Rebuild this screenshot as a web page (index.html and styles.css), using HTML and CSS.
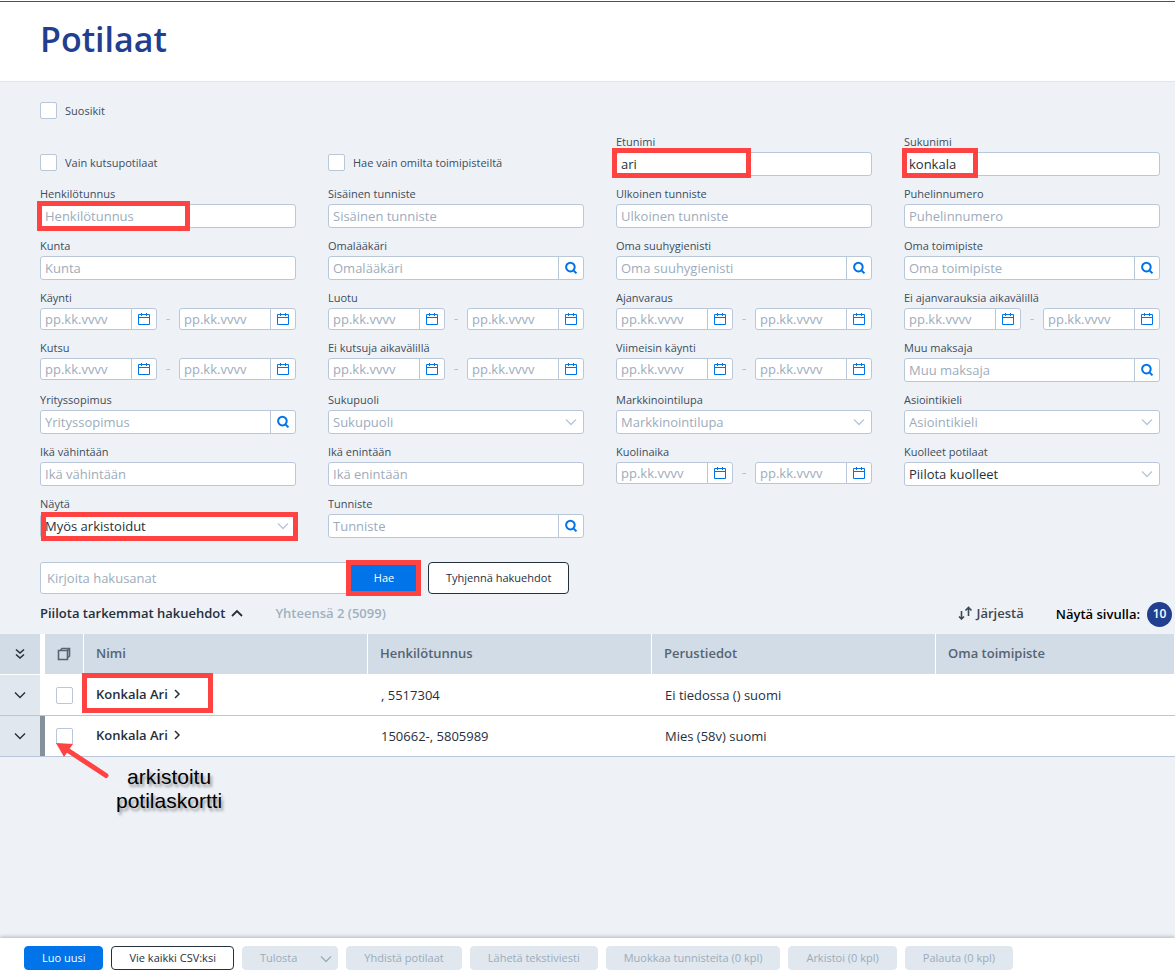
FILE: index.html
```html
<!DOCTYPE html>
<html lang="fi">
<head>
    <meta charset="UTF-8">
    <meta name="viewport" content="width=device-width, initial-scale=1">
    <title>Potilaat</title>
    <link rel="stylesheet" href="styles.css">
</head>
<body>

<!-- icons -->
<svg class="sprite" aria-hidden="true">
    <symbol id="i-cal" viewBox="0 0 14 14"><path d="M1.5 2.5h11v10h-11zM1 5.5h12M4.5 1v3M9.5 1v3" fill="none" stroke="currentColor"/></symbol>
    <symbol id="i-search" viewBox="0 0 14 14"><path d="M10.7 6.1a4.3 4.3 0 1 1-8.6 0a4.3 4.3 0 1 1 8.6 0zM9.3 9.2l3.2 3.2" fill="none" stroke="currentColor" stroke-width="2"/></symbol>
    <symbol id="i-down" viewBox="0 0 12 12"><path d="M1 3.5l5 5l5-5" fill="none" stroke="currentColor" stroke-width="1.4"/></symbol>
    <symbol id="i-up" viewBox="0 0 12 12"><path d="M1 9l5-5l5 5" fill="none" stroke="currentColor" stroke-width="1.8"/></symbol>
    <symbol id="i-right" viewBox="0 0 8 10"><path d="M2 1l4 4l-4 4" fill="none" stroke="currentColor" stroke-width="1.5"/></symbol>
    <symbol id="i-double" viewBox="0 0 12 12"><path d="M2 1.500l4 3.500l4-3.500M2 6.500l4 3.500l4-3.500" fill="none" stroke="currentColor" stroke-width="1.6"/></symbol>
</svg>

<header class="header">
    <h1>Potilaat</h1>
</header>

<main class="content">
    <form class="search">
        <label class="check"><input type="checkbox"> Suosikit</label>

        <div class="fields">
            <label class="check in-grid"><input type="checkbox"> Vain kutsupotilaat</label>
            <label class="check in-grid"><input type="checkbox"> Hae vain omilta toimipisteiltä</label>
            <div class="field">
                <label for="etunimi">Etunimi</label>
                <div class="box"><input type="text" id="etunimi" value="ari"><span class="mark mark-first"></span></div>
            </div>
            <div class="field">
                <label for="sukunimi">Sukunimi</label>
                <div class="box"><input type="text" id="sukunimi" value="konkala"><span class="mark mark-last"></span></div>
            </div>

            <div class="field">
                <label for="hetu">Henkilötunnus</label>
                <div class="box"><input type="text" id="hetu" placeholder="Henkilötunnus"><span class="mark mark-hetu"></span></div>
            </div>
            <div class="field">
                <label for="sis">Sisäinen tunniste</label>
                <div class="box"><input type="text" id="sis" placeholder="Sisäinen tunniste"></div>
            </div>
            <div class="field">
                <label for="ulk">Ulkoinen tunniste</label>
                <div class="box"><input type="text" id="ulk" placeholder="Ulkoinen tunniste"></div>
            </div>
            <div class="field">
                <label for="puh">Puhelinnumero</label>
                <div class="box"><input type="text" id="puh" placeholder="Puhelinnumero"></div>
            </div>

            <div class="field">
                <label for="kunta">Kunta</label>
                <div class="box"><input type="text" id="kunta" placeholder="Kunta"></div>
            </div>
            <div class="field">
                <label for="laakari">Omalääkäri</label>
                <div class="box"><input type="text" id="laakari" placeholder="Omalääkäri"><button type="button" class="pick" aria-label="Hae"><svg><use href="#i-search"/></svg></button></div>
            </div>
            <div class="field">
                <label for="suuhyg">Oma suuhygienisti</label>
                <div class="box"><input type="text" id="suuhyg" placeholder="Oma suuhygienisti"><button type="button" class="pick" aria-label="Hae"><svg><use href="#i-search"/></svg></button></div>
            </div>
            <div class="field">
                <label for="toimip">Oma toimipiste</label>
                <div class="box"><input type="text" id="toimip" placeholder="Oma toimipiste"><button type="button" class="pick" aria-label="Hae"><svg><use href="#i-search"/></svg></button></div>
            </div>

            <div class="field">
                <label for="kaynti">Käynti</label>
                <div class="range">
                    <div class="box date"><input type="text" id="kaynti" placeholder="pp.kk.vvvv"><button type="button" class="pick" aria-label="Kalenteri"><svg><use href="#i-cal"/></svg></button></div>
                    <span>-</span>
                    <div class="box date"><input type="text" aria-label="Käynti loppu" placeholder="pp.kk.vvvv"><button type="button" class="pick" aria-label="Kalenteri"><svg><use href="#i-cal"/></svg></button></div>
                </div>
            </div>
            <div class="field">
                <label for="luotu">Luotu</label>
                <div class="range">
                    <div class="box date"><input type="text" id="luotu" placeholder="pp.kk.vvvv"><button type="button" class="pick" aria-label="Kalenteri"><svg><use href="#i-cal"/></svg></button></div>
                    <span>-</span>
                    <div class="box date"><input type="text" aria-label="Luotu loppu" placeholder="pp.kk.vvvv"><button type="button" class="pick" aria-label="Kalenteri"><svg><use href="#i-cal"/></svg></button></div>
                </div>
            </div>
            <div class="field">
                <label for="ajanvaraus">Ajanvaraus</label>
                <div class="range">
                    <div class="box date"><input type="text" id="ajanvaraus" placeholder="pp.kk.vvvv"><button type="button" class="pick" aria-label="Kalenteri"><svg><use href="#i-cal"/></svg></button></div>
                    <span>-</span>
                    <div class="box date"><input type="text" aria-label="Ajanvaraus loppu" placeholder="pp.kk.vvvv"><button type="button" class="pick" aria-label="Kalenteri"><svg><use href="#i-cal"/></svg></button></div>
                </div>
            </div>
            <div class="field">
                <label for="eiajan">Ei ajanvarauksia aikavälillä</label>
                <div class="range">
                    <div class="box date"><input type="text" id="eiajan" placeholder="pp.kk.vvvv"><button type="button" class="pick" aria-label="Kalenteri"><svg><use href="#i-cal"/></svg></button></div>
                    <span>-</span>
                    <div class="box date"><input type="text" aria-label="Ei ajanvarauksia loppu" placeholder="pp.kk.vvvv"><button type="button" class="pick" aria-label="Kalenteri"><svg><use href="#i-cal"/></svg></button></div>
                </div>
            </div>

            <div class="field">
                <label for="kutsu">Kutsu</label>
                <div class="range">
                    <div class="box date"><input type="text" id="kutsu" placeholder="pp.kk.vvvv"><button type="button" class="pick" aria-label="Kalenteri"><svg><use href="#i-cal"/></svg></button></div>
                    <span>-</span>
                    <div class="box date"><input type="text" aria-label="Kutsu loppu" placeholder="pp.kk.vvvv"><button type="button" class="pick" aria-label="Kalenteri"><svg><use href="#i-cal"/></svg></button></div>
                </div>
            </div>
            <div class="field">
                <label for="eikutsu">Ei kutsuja aikavälillä</label>
                <div class="range">
                    <div class="box date"><input type="text" id="eikutsu" placeholder="pp.kk.vvvv"><button type="button" class="pick" aria-label="Kalenteri"><svg><use href="#i-cal"/></svg></button></div>
                    <span>-</span>
                    <div class="box date"><input type="text" aria-label="Ei kutsuja loppu" placeholder="pp.kk.vvvv"><button type="button" class="pick" aria-label="Kalenteri"><svg><use href="#i-cal"/></svg></button></div>
                </div>
            </div>
            <div class="field">
                <label for="viimeisin">Viimeisin käynti</label>
                <div class="range">
                    <div class="box date"><input type="text" id="viimeisin" placeholder="pp.kk.vvvv"><button type="button" class="pick" aria-label="Kalenteri"><svg><use href="#i-cal"/></svg></button></div>
                    <span>-</span>
                    <div class="box date"><input type="text" aria-label="Viimeisin käynti loppu" placeholder="pp.kk.vvvv"><button type="button" class="pick" aria-label="Kalenteri"><svg><use href="#i-cal"/></svg></button></div>
                </div>
            </div>
            <div class="field">
                <label for="maksaja">Muu maksaja</label>
                <div class="box"><input type="text" id="maksaja" placeholder="Muu maksaja"><button type="button" class="pick" aria-label="Hae"><svg><use href="#i-search"/></svg></button></div>
            </div>

            <div class="field">
                <label for="yritys">Yrityssopimus</label>
                <div class="box"><input type="text" id="yritys" placeholder="Yrityssopimus"><button type="button" class="pick" aria-label="Hae"><svg><use href="#i-search"/></svg></button></div>
            </div>
            <div class="field">
                <label for="sukupuoli">Sukupuoli</label>
                <div class="box"><select id="sukupuoli" class="empty"><option>Sukupuoli</option></select><svg class="arrow"><use href="#i-down"/></svg></div>
            </div>
            <div class="field">
                <label for="markk">Markkinointilupa</label>
                <div class="box"><select id="markk" class="empty"><option>Markkinointilupa</option></select><svg class="arrow"><use href="#i-down"/></svg></div>
            </div>
            <div class="field">
                <label for="kieli">Asiointikieli</label>
                <div class="box"><select id="kieli" class="empty"><option>Asiointikieli</option></select><svg class="arrow"><use href="#i-down"/></svg></div>
            </div>

            <div class="field">
                <label for="ikamin">Ikä vähintään</label>
                <div class="box"><input type="text" id="ikamin" placeholder="Ikä vähintään"></div>
            </div>
            <div class="field">
                <label for="ikamax">Ikä enintään</label>
                <div class="box"><input type="text" id="ikamax" placeholder="Ikä enintään"></div>
            </div>
            <div class="field">
                <label for="kuolinaika">Kuolinaika</label>
                <div class="range">
                    <div class="box date"><input type="text" id="kuolinaika" placeholder="pp.kk.vvvv"><button type="button" class="pick" aria-label="Kalenteri"><svg><use href="#i-cal"/></svg></button></div>
                    <span>-</span>
                    <div class="box date"><input type="text" aria-label="Kuolinaika loppu" placeholder="pp.kk.vvvv"><button type="button" class="pick" aria-label="Kalenteri"><svg><use href="#i-cal"/></svg></button></div>
                </div>
            </div>
            <div class="field">
                <label for="kuolleet">Kuolleet potilaat</label>
                <div class="box"><select id="kuolleet"><option>Piilota kuolleet</option></select><svg class="arrow"><use href="#i-down"/></svg></div>
            </div>

            <div class="field">
                <label for="nayta">Näytä</label>
                <div class="box"><select id="nayta"><option>Myös arkistoidut</option></select><svg class="arrow"><use href="#i-down"/></svg><span class="mark mark-show"></span></div>
            </div>
            <div class="field">
                <label for="tunniste">Tunniste</label>
                <div class="box"><input type="text" id="tunniste" placeholder="Tunniste"><button type="button" class="pick" aria-label="Hae"><svg><use href="#i-search"/></svg></button></div>
            </div>
        </div>

        <div class="query">
            <input type="text" aria-label="Hakusanat" placeholder="Kirjoita hakusanat">
            <div class="submit"><button type="submit">Hae</button><span class="mark mark-submit"></span></div>
            <button type="reset" class="btn">Tyhjennä hakuehdot</button>
        </div>
    </form>

    <div class="toolbar">
        <button type="button" class="link-btn">Piilota tarkemmat hakuehdot <svg><use href="#i-up"/></svg></button>
        <span class="total">Yhteensä 2 (5099)</span>
        <button type="button" class="link-btn sort">
            <svg viewBox="0 0 16 14"><path d="M4.500 5v8M2 10.500l2.500 2.500l2.500-2.500M11.500 10V1.500M8.500 4.500l3-3l3 3" fill="none" stroke="currentColor" stroke-width="1.6"/></svg>
            Järjestä
        </button>
        <span class="per-page">Näytä sivulla:</span>
        <button type="button" class="page-size">10</button>
    </div>

    <!-- results -->
    <div class="results">
        <table>
            <colgroup><col class="c-toggle"><col class="c-gap"><col class="c-check"><col class="c-data"><col class="c-data"><col class="c-data"><col></colgroup>
            <thead>
                <tr>
                    <th class="icon"><svg class="i12"><use href="#i-double"/></svg></th>
                    <th class="gap"></th>
                    <th class="icon"><svg class="i14" viewBox="0 0 14 14"><path d="M3.500 3L5 1.500h7.500V9L11 10.500M10.500 3.500l2-2" fill="none" stroke="currentColor" stroke-width="1.6"/><path d="M1.500 3.500h9v9h-9z" fill="none" stroke="currentColor" stroke-width="1.6"/></svg></th>
                    <th>Nimi</th>
                    <th>Henkilötunnus</th>
                    <th>Perustiedot</th>
                    <th>Oma toimipiste</th>
                </tr>
            </thead>
            <tbody>
                <tr>
                    <td class="toggle"><svg class="i12"><use href="#i-down"/></svg></td>
                    <td class="gap"></td>
                    <td class="icon"><input type="checkbox" aria-label="Valitse rivi 1"></td>
                    <td class="name"><a href="#">Konkala Ari <svg><use href="#i-right"/></svg></a><span class="mark mark-name"></span></td>
                    <td>, 5517304</td>
                    <td>Ei tiedossa () suomi</td>
                    <td></td>
                </tr>
                <tr>
                    <td class="toggle"><svg class="i12"><use href="#i-down"/></svg></td>
                    <td class="gap archived"></td>
                    <td class="icon"><input type="checkbox" aria-label="Valitse rivi 2"></td>
                    <td class="name"><a href="#">Konkala Ari <svg><use href="#i-right"/></svg></a></td>
                    <td>150662-, 5805989</td>
                    <td>Mies (58v) suomi</td>
                    <td></td>
                </tr>
            </tbody>
        </table>
        <div class="note">
            <svg viewBox="0 0 56 38"><path d="M10 5.500L51 32.500" stroke="#ff4343" stroke-width="5" stroke-linecap="round"/><path d="M1 0l17 1l-9 13z" fill="#ff4343"/></svg>
            <p>arkistoitu<br>potilaskortti</p>
        </div>
    </div>
</main>

<footer class="actions">
    <button type="button" class="btn primary">Luo uusi</button>
    <button type="button" class="btn">Vie kaikki CSV:ksi</button>
    <button type="button" class="btn" disabled>Tulosta <svg><use href="#i-down"/></svg></button>
    <button type="button" class="btn" disabled>Yhdistä potilaat</button>
    <button type="button" class="btn" disabled>Lähetä tekstiviesti</button>
    <button type="button" class="btn" disabled>Muokkaa tunnisteita (0 kpl)</button>
    <button type="button" class="btn" disabled>Arkistoi (0 kpl)</button>
    <button type="button" class="btn" disabled>Palauta (0 kpl)</button>
</footer>

</body>
</html>
```
FILE: styles.css
```css
* {
    box-sizing: border-box;
}

body {
    margin: 0;
    min-height: 100vh;
    display: flex;
    flex-direction: column;
    background: #eef2f7;
    color: #25303d;
    font-family: "Open Sans", "Noto Sans", sans-serif;
    font-size: 13px;
    line-height: 16px;
}

button, input, select {
    font: inherit;
    color: inherit;
    margin: 0;
}

button {
    cursor: pointer;
}

.sprite {
    position: absolute;
    width: 0;
    height: 0;
}

.header {
    background: #fff;
    border-bottom: 1px solid #dfe6ee;
    padding: 1px 0 18px;
}

.header h1 {
    margin: 0;
    border-top: 1px solid #34548c;
    padding: 13px 40px 0;
    color: #223f8f;
    font-size: 34px;
    font-weight: 600;
    line-height: 48px;
}

.content {
    flex: 1;
}

.search {
    padding: 20px 15px 0 40px;
}

.check {
    display: flex;
    align-items: center;
    gap: 8px;
    color: #3d4c5b;
    font-size: 11px;
    font-weight: 500;
    height: 17px;
}

.check.in-grid {
    align-self: end;
    margin-bottom: 5px;
}

input[type="checkbox"] {
    appearance: none;
    width: 17px;
    height: 17px;
    border: 1px solid #b9c7d8;
    border-radius: 2px;
    background: #fff;
}

.fields {
    display: grid;
    grid-template-columns: repeat(4, minmax(0, 1fr));
    gap: 10px 32px;
    margin-top: 15px;
}

.field label {
    display: block;
    margin-bottom: 2px;
    color: #3d4c5b;
    font-size: 11px;
    font-weight: 500;
}

.box {
    position: relative;
    display: flex;
    height: 24px;
    border: 1px solid #b9c7d8;
    border-radius: 3px;
    background: #fff;
}

.box input, .box select {
    flex: 1;
    min-width: 0;
    border: none;
    background: none;
    padding: 0 4px;
    appearance: none;
    outline: none;
}

::placeholder, .box .empty {
    color: #9dacbc;
    opacity: 1;
}

.pick {
    flex: none;
    width: 25px;
    padding: 0;
    border: none;
    border-left: 1px solid #b9c7d8;
    background: none;
    color: #0074e8;
    display: flex;
    align-items: center;
    justify-content: center;
}

.pick svg {
    width: 14px;
    height: 14px;
}

.arrow {
    position: absolute;
    right: 6px;
    top: 5px;
    width: 12px;
    height: 12px;
    color: #b9c7d8;
    pointer-events: none;
}

.range {
    display: flex;
}

.range .box {
    flex: 1;
    min-width: 0;
    height: 22px;
}

.range > span {
    width: 22px;
    text-align: center;
    line-height: 20px;
    color: #b0bdca;
}

.query {
    display: flex;
    margin-top: 24px;
}

.query > input {
    width: 308px;
    height: 32px;
    padding: 0 6px;
    border: 1px solid #b9c7d8;
    border-radius: 3px 0 0 3px;
    background: #fff;
}

.submit {
    position: relative;
    margin-right: 8px;
}

.submit button {
    width: 72px;
    height: 32px;
    border: none;
    border-radius: 0 4px 4px 0;
    background: #0074e8;
    color: #fff;
    font-size: 11px;
    font-weight: 500;
}

.btn {
    padding: 0 17px;
    border: 1px solid #25303d;
    border-radius: 4px;
    background: #fff;
    font-size: 11px;
    font-weight: 500;
    white-space: nowrap;
}

.toolbar {
    display: flex;
    align-items: center;
    height: 40px;
    padding: 0 3px 0 40px;
    font-weight: 600;
}

.link-btn, .total {
    padding: 0 0 2px;
}

.link-btn {
    display: flex;
    align-items: center;
    gap: 6px;
    border: none;
    background: none;
    font-weight: 600;
}

.link-btn svg {
    width: 12px;
    height: 12px;
}

.total {
    margin-left: 32px;
    color: #9fb0c0;
}

.link-btn.sort {
    margin-left: auto;
    gap: 4px;
    color: #3c4853;
}

.link-btn.sort svg {
    width: 16px;
    height: 14px;
}

.per-page {
    margin: 0 7px 0 32px;
    color: #000;
}

.page-size {
    width: 25px;
    height: 25px;
    padding: 0;
    border: none;
    border-radius: 50%;
    background: #223f8f;
    color: #fff;
    font-size: 12px;
    font-weight: 600;
}

.results {
    position: relative;
}

table {
    width: 100%;
    table-layout: fixed;
    border-collapse: separate;
    border-spacing: 0;
}

.c-toggle { width: 40px; }
.c-gap { width: 5px; }
.c-check { width: 39px; }
.c-data { width: 284px; }

th {
    height: 41px;
    padding: 0 12px 2px;
    border-right: 1px solid #fff;
    border-bottom: 1px solid #fff;
    background: #d2dce6;
    color: #566472;
    font-weight: 600;
    text-align: left;
}

td {
    height: 41px;
    padding: 0 13px;
    border-bottom: 1px solid #b9c7d8;
    background: #fff;
}

th:first-child {
    border-right: none;
}

.gap, th.gap {
    padding: 0;
    border-right: none;
    background: #fff;
}

.icon, .toggle {
    padding: 0;
    text-align: center;
}

.icon svg, .toggle svg, .icon input {
    display: block;
    margin: 0 auto;
}

.i12 {
    width: 12px;
    height: 12px;
    color: #25303d;
}

.i14 {
    width: 14px;
    height: 14px;
}

.toggle {
    background: #e0e7ee;
}

.gap.archived {
    background: #84909b;
}

.name {
    position: relative;
    padding: 0 12px 2px;
}

.name a {
    color: inherit;
    font-weight: 600;
    text-decoration: none;
}

.name svg {
    width: 8px;
    height: 10px;
    margin-left: 2px;
}

/* red frames over the controls */
.mark {
    position: absolute;
    border: 5px solid #ff4343;
    pointer-events: none;
}

.mark-first { left: -5px; top: -5px; width: 139px; height: 30px; }
.mark-last { left: -3px; top: -5px; width: 76px; height: 30px; }
.mark-hetu { left: -4px; top: -4px; width: 153px; height: 30px; }
.mark-show { left: 0; top: -3px; width: 257px; height: 29px; }
.mark-submit { left: -2px; top: -2px; width: 75px; height: 36px; }
.mark-name { left: -2px; top: -2px; width: 131px; height: 40px; }

.note {
    position: absolute;
    left: 55px;
    top: 109px;
}

.note svg {
    display: block;
    width: 56px;
    height: 38px;
}

.note p {
    position: absolute;
    left: 61px;
    top: 22px;
    margin: 0;
    color: #000;
    font: 21px/24px "Liberation Sans", Arial, sans-serif;
    text-align: center;
    text-shadow: 2px 3px 3px rgba(0, 0, 0, 0.4);
}

.actions {
    position: sticky;
    bottom: 0;
    display: flex;
    gap: 8px;
    padding: 8px 24px 2px;
    background: #fff;
    box-shadow: 0 -1px 4px rgba(60, 70, 80, 0.35);
}

.actions .btn {
    height: 24px;
}

.btn.primary {
    border-color: #0074e8;
    background: #0074e8;
    color: #fff;
}

.btn:disabled {
    border-color: #e0e7ee;
    background: #e0e7ee;
    color: #9bacbc;
}

.actions svg {
    width: 12px;
    height: 12px;
    margin: 0 -12px 0 20px;
    vertical-align: middle;
}
```
